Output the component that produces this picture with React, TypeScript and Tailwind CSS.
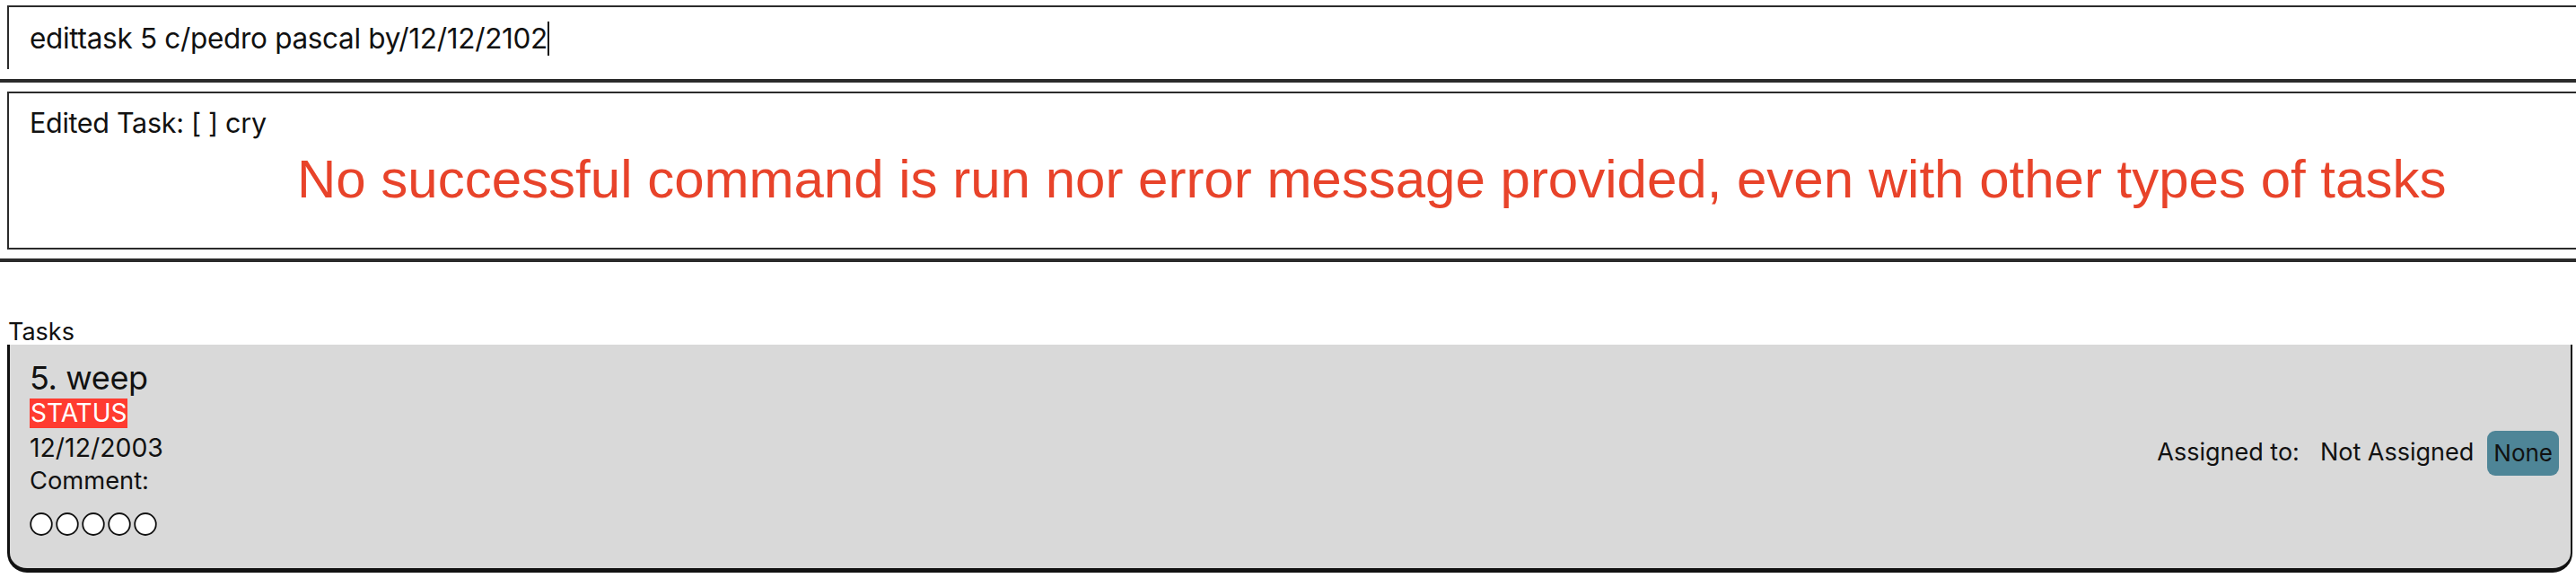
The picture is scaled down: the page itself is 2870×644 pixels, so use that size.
const ui = { fontFamily: 'Inter, "Liberation Sans", sans-serif' };

function Dots() {
  return (
    <div className="flex gap-[3px]">
      {[0, 1, 2, 3, 4].map((i) => (
        <svg key={i} width="26" height="26" viewBox="0 0 26 26">
          <ellipse cx="13" cy="13" rx="11.8" ry="12" fill="#fff" stroke="#111" strokeWidth="1.8" />
        </svg>
      ))}
    </div>
  );
}

export default function App() {
  return (
    <div className="w-[2870px] h-[644px] bg-white overflow-hidden text-[#111]" style={ui}>
      {/* command box */}
      <div className="pt-[6px] pl-[8px]">
        <div className="h-[71px] border-t-2 border-l-2 border-[#2b2b2b] flex items-center pl-[23px]">
          <span className="text-[31.5px] tracking-[-0.01em] leading-none">edittask 5 c/pedro pascal by/12/12/2102</span>
          <span className="w-[2px] h-[38px] bg-[#111]" />
        </div>
      </div>
      <div className="mt-[11px] h-[4px] bg-[#2b2b2b]" />

      {/* result box */}
      <div className="mt-[10px] pl-[8px]">
        <div className="h-[176px] border-t-2 border-l-2 border-b-2 border-[#2b2b2b] pl-[23px] pt-[16px]">
          <div className="text-[30.5px] tracking-[-0.01em] leading-[34px]">Edited Task: [ ] cry</div>
          <div
            className="ml-[298px] mt-[14px] text-[60px] leading-[64px] text-[#e8432a]"
            style={{ fontFamily: '"Liberation Sans", Arial, sans-serif' }}
          >
            No successful command is run nor error message provided, even with other types of tasks
          </div>
        </div>
      </div>
      <div className="mt-[10px] h-[4px] bg-[#2b2b2b]" />

      {/* task list */}
      <div className="mt-[64px] pl-[9px] text-[27px] leading-[28px]">Tasks</div>
      <div className="ml-[8px] mr-[4px] h-[254px] bg-[#d9d9d9] border-l-[3px] border-r-2 border-b-[5px] border-[#111] rounded-b-[22px] flex items-center justify-between pl-[22px] pr-[13px]">
        <div className="flex flex-col self-start pt-[17px]">
          <div className="text-[36px] leading-[40px] tracking-[-0.01em]">5. weep</div>
          <div className="mt-[3px] self-start bg-[#ff3b30] text-white text-[28px] leading-[33px] px-[1px]">STATUS</div>
          <div className="mt-[3px] text-[28.4px] leading-[37px]">12/12/2003</div>
          <div className="text-[27.3px] leading-[37px]">Comment:</div>
          <div className="mt-[17px]">
            <Dots />
          </div>
        </div>
        <div className="flex items-center text-[27px] mb-[8px]">
          <span>Assigned to:</span>
          <span className="ml-[23px]">Not Assigned</span>
          <span className="ml-[15px] bg-[#4e8597] rounded-[9px] px-[7px] h-[50px] flex items-center text-[26px]">None</span>
        </div>
      </div>
    </div>
  );
}
